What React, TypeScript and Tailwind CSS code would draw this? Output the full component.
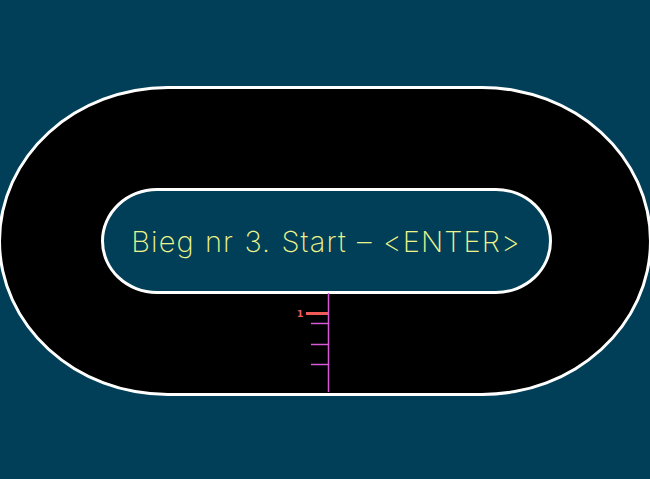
import React from "react";

export default function App() {
  return (
    <div className="w-[650px] h-[479px] bg-[#003f57] overflow-hidden pt-[86px]">
      <div className="relative -ml-[2px] w-[654px] h-[310px] border-[3px] border-white bg-black rounded-[170px/155px] flex items-center justify-center">
        <div className="ml-[2px] w-[451px] h-[106px] border-[3px] border-white rounded-[56px/53px] bg-[#003f57] flex items-center justify-center">
          <span
            className="text-[29px] leading-none text-[#eef48c] tracking-[1.1px] [word-spacing:1px] whitespace-nowrap"
            style={{ fontFamily: "Inter, 'DejaVu Sans', sans-serif", fontWeight: 200 }}
          >
            Bieg nr 3. Start – &lt;ENTER&gt;
          </span>
        </div>
        <svg
          className="absolute left-[293px] top-[204px]"
          width="38"
          height="99"
          viewBox="0 0 38 99"
        >
          <line x1="34.5" y1="0" x2="34.5" y2="99" stroke="#d65ad6" strokeWidth="1.5" />
          <line x1="17" y1="30.5" x2="34" y2="30.5" stroke="#d65ad6" strokeWidth="1.5" />
          <line x1="17" y1="51.5" x2="34" y2="51.5" stroke="#d65ad6" strokeWidth="1.5" />
          <line x1="17" y1="71.5" x2="34" y2="71.5" stroke="#d65ad6" strokeWidth="1.5" />
          <rect x="12" y="19" width="22" height="3" fill="#f25a5a" />
          <text
            x="3"
            y="23.5"
            fill="#f25a5a"
            fontSize="9"
            fontWeight="700"
            fontFamily="'DejaVu Sans', sans-serif"
          >
            1
          </text>
        </svg>
      </div>
    </div>
  );
}
